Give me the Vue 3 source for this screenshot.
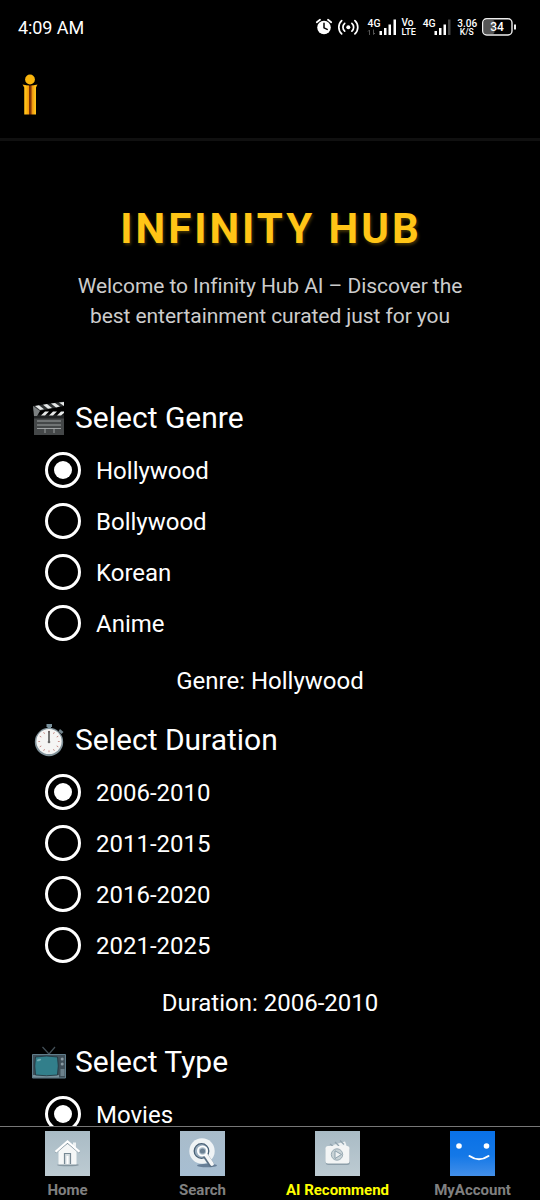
<script setup>
import { reactive } from 'vue'

const sections = reactive([
  { icon: 'clapper', title: 'Select Genre', label: 'Genre', value: 'Hollywood', options: ['Hollywood', 'Bollywood', 'Korean', 'Anime'] },
  { icon: 'watch', title: 'Select Duration', label: 'Duration', value: '2006-2010', options: ['2006-2010', '2011-2015', '2016-2020', '2021-2025'] },
  { icon: 'tv', title: 'Select Type', value: 'Movies', options: ['Movies'] }
])
const ticks = Array.from({ length: 12 }, (_, i) => i * 30)
</script>

<template>
  <div class="screen">
    <div class="status">
      <span class="time">4:09 AM</span>
      <svg class="indicators" width="206" height="30" viewBox="0 0 206 30">
        <g fill="none" stroke="#fff" stroke-linecap="round">
          <circle cx="10" cy="15.5" r="6.8" fill="#fff" stroke="none" />
          <path d="M10 11.3v4.5l3.2 1.6" stroke="#000" stroke-width="1.5" />
          <path d="M2.8 10.2 6 7.8M17.2 10.2 14 7.8" stroke-width="1.8" />
          <circle cx="34.3" cy="15.2" r="2" fill="#fff" stroke="none" />
          <path d="M30.7 11.3a5.2 5.2 0 0 0 0 7.8M37.9 11.3a5.2 5.2 0 0 1 0 7.8M27.7 8.6a9 9 0 0 0 0 13.2M40.9 8.6a9 9 0 0 1 0 13.2" stroke-width="1.7" />
        </g>
        <g fill="#fff" font-weight="500">
          <text x="53.5" y="14.5" font-size="10.5" textLength="13" lengthAdjust="spacingAndGlyphs">4G</text>
          <text x="87.5" y="14.3" font-size="10" textLength="12">Vo</text>
          <text x="87.5" y="23.3" font-size="9.8" textLength="14.5" lengthAdjust="spacingAndGlyphs">LTE</text>
          <text x="108.7" y="14.5" font-size="10.5" textLength="13" lengthAdjust="spacingAndGlyphs">4G</text>
          <text x="143.3" y="14.5" font-size="10.5" textLength="20" lengthAdjust="spacingAndGlyphs">3.06</text>
          <text x="145.8" y="23" font-size="8.8" textLength="14" lengthAdjust="spacingAndGlyphs">K/S</text>
          <path d="M65.5 19h2.5v4h-2.500zM70 16h2.500v7h-2.500zM74.500 12.500h2.500v10.500h-2.500zM79.500 7.500h2.500v15.500h-2.500zM120.500 19h2.500v4h-2.500zM125 16h2.500v7h-2.500zM129.500 12.500h2.500v10.500h-2.500z" />
          <path d="M134 7.500h2.500v15.500h-2.500z" fill="#454545" />
        </g>
        <path d="M55.500 23v-5l-1.500 1.500M59.500 17.500v5l1.500-1.500" fill="none" stroke="#555" />
        <rect x="169.500" y="8" width="11" height="14" rx="2" fill="#555" />
        <rect x="168.700" y="6.700" width="29.300" height="16.300" rx="4" fill="none" stroke="#eee" stroke-width="1.400" />
        <path d="M201 12.500v5" stroke="#eee" stroke-width="2" />
        <text x="183" y="19.200" fill="#fff" font-size="12" font-weight="500" text-anchor="middle">34</text>
      </svg>
    </div>

    <header class="header">
      <svg width="18" height="42" viewBox="0 0 18 42">
        <defs>
          <linearGradient id="gold" x1="0" x2="1">
            <stop offset="0" stop-color="#ee9b08" /><stop offset=".2" stop-color="#ffc21a" />
            <stop offset=".4" stop-color="#f89e08" /><stop offset=".45" stop-color="#7e3005" />
            <stop offset=".57" stop-color="#8b3a08" /><stop offset=".64" stop-color="#ed930c" />
            <stop offset=".85" stop-color="#ffc51d" /><stop offset="1" stop-color="#ed9808" />
          </linearGradient>
        </defs>
        <circle cx="9" cy="5.500" r="4.900" fill="#f9b50d" />
        <path d="M1.500 10.500q7.500 2 15 0l-1.500 3V40.500H3.200V13.500z" fill="url(#gold)" />
      </svg>
    </header>

    <main class="content">
      <h1>INFINITY HUB</h1>
      <p class="intro">Welcome to Infinity Hub AI – Discover the<br>best entertainment curated just for you</p>

      <section v-for="s in sections" :key="s.title">
        <h2>
          <svg v-if="s.icon === 'clapper'" class="emoji" viewBox="0 0 36 36">
            <path d="M3 15h30v20H3z" fill="#444748" />
            <path d="M3 14.500h30v4H3z" fill="#202223" />
            <path d="m2 6 31-4.500v4.500L3 12z" fill="#2f3233" />
            <path d="m4 6 5 4 4-.8-5-4zm8-1.200 5 3.900 4-.8-5-3.800zm8-1.200 5 3.800 4-.8-5-3.600zm8-1.200 5 3.500V2z" fill="#e5e7e7" />
            <path d="m2 6 7 5-3 5H3z" fill="#7c8081" />
            <path d="M14 11.500h4l-4 4h-4zm8 0h4l-4 4h-4zm8 0h3v1.500L30 15.500h-4z" fill="#e8eaea" />
            <path d="M6 21h24M6 25h24M6 28.500h24M14 28.500V33m9-4.500V33" fill="none" stroke="#a7aaab" stroke-width=".9" />
          </svg>
          <svg v-else-if="s.icon === 'watch'" class="emoji" viewBox="0 0 36 36">
            <path d="M15.500 2h5.500v3h-1v3h-3.500V5h-1z" fill="#78909c" />
            <path d="m29 7 3.500 3-2 2-3-2.800z" fill="#71838c" />
            <circle cx="18" cy="20" r="14.200" fill="#82939b" />
            <circle cx="18" cy="19.500" r="12.600" fill="#f5f5f4" />
            <path v-for="t in ticks" :key="t" d="M18 8.800v1.800" :transform="`rotate(${t} 18 19.500)`" stroke="#bd7772" stroke-width=".8" />
            <path d="M18 9v11" stroke="#333" stroke-width="1.300" /><circle cx="18" cy="20" r="1.300" fill="#666" />
          </svg>
          <svg v-else class="emoji" viewBox="0 0 36 36">
            <path d="m11.500 3 6.500 7 6-7" fill="none" stroke="#435058" stroke-width="1.200" />
            <path d="M1.500 10.500h33V34h-33z" fill="#40505a" stroke="#607d8b" />
            <path d="M2 31h26v2.500H2z" fill="#76909b" />
            <path d="M4.500 13q11-2 22 0 1.500 9 0 18-11 1.500-22 0-1.500-9 0-18z" fill="#327f8b" stroke="#203039" stroke-width=".8" />
            <ellipse cx="8" cy="16" rx="2.300" ry="1.100" fill="#72abb2" transform="rotate(-20 8 16)" />
            <circle cx="31.200" cy="15" r="1.500" fill="#899ba3" /><circle cx="31.200" cy="20" r="1.500" fill="#899ba3" />
            <path d="M29.500 25h4v7h-4z" fill="#6b808b" />
          </svg>
          <span>{{ s.title }}</span>
        </h2>
        <div class="options">
          <div v-for="o in s.options" :key="o" class="option" @click="s.value = o">
            <i class="radio" :class="{ on: s.value === o }"></i><span>{{ o }}</span>
          </div>
        </div>
        <p v-if="s.label" class="result">{{ s.label }}: {{ s.value }}</p>
      </section>
    </main>

    <nav class="tabs">
      <div class="tab">
        <svg viewBox="0 0 45 45">
          <defs><linearGradient id="pale" x2="0" y2="1"><stop stop-color="#a9bbc5" /><stop offset="1" stop-color="#bdcbd2" /></linearGradient></defs>
          <path d="M0 0h45v45H0z" fill="url(#pale)" />
          <ellipse cx="23" cy="34" rx="11" ry="1.300" fill="#8596a0" />
          <path d="M13.500 20 22.500 11.500l9 8.500v13.500h-18z" fill="#f5f7f7" />
          <path d="M28 11.500h3V18l-3-3z" fill="#eef2f3" />
          <path d="m10.500 21.500 12-10 12 10" fill="none" stroke="#778b97" stroke-width="2" />
          <path d="m10.500 20.800 12-10.300 12 10.300" fill="none" stroke="#fff" stroke-width="2.200" />
          <path d="M19.500 33V22.500h6V33" fill="#d6dee1" stroke="#778994" stroke-width="1.200" /><path d="M21.500 25h2v8h-2z" fill="#fff" />
        </svg>
        <span>Home</span>
      </div>
      <div class="tab">
        <svg viewBox="0 0 45 45">
          <defs><linearGradient id="blueGrey" x2="0" y2="1"><stop stop-color="#a9bcca" /><stop offset="1" stop-color="#a7bed2" /></linearGradient></defs>
          <path d="M0 0h45v45H0z" fill="url(#blueGrey)" />
          <ellipse cx="27" cy="34.500" rx="10" ry="1.700" fill="#667e97" />
          <circle cx="22" cy="20" r="12.700" fill="#eff3f5" />
          <circle cx="21.500" cy="20" r="7.300" fill="#9baebf" stroke="#496176" stroke-width="1.300" />
          <path d="m25 24 6 9" stroke="#5b7185" stroke-width="5.500" stroke-linecap="round" />
          <path d="m26 24 6 9" stroke="#f4f6f7" stroke-width="3.800" stroke-linecap="round" />
          <circle cx="22.500" cy="20" r="4.600" fill="#b3c3cf" stroke="#fff" stroke-width="1.800" />
          <circle cx="22.500" cy="20" r="2.600" fill="#6c8194" />
        </svg>
        <span>Search</span>
      </div>
      <div class="tab active">
        <svg viewBox="0 0 45 45">
          <path d="M0 0h45v45H0z" fill="url(#pale)" />
          <path d="m13 15.500 17-5 1.500 4V17H13z" fill="#eef2f3" />
          <path d="m15 13 4 3m1-5 4 4m1-5.500 4 4" stroke="#91a3ae" stroke-width="1.300" />
          <rect x="10.800" y="16.500" width="24" height="17.500" rx="2.500" fill="#8c9ea9" />
          <rect x="10.500" y="15" width="24" height="17.500" rx="2.500" fill="#f3f5f5" />
          <circle cx="22" cy="23.500" r="5.700" fill="#c8d2d6" stroke="#9aabb4" />
          <path d="m20 19.800 6.500 3.700-6.500 4z" fill="#eef1f2" stroke="#859aa6" stroke-width=".9" />
        </svg>
        <span>AI Recommend</span>
      </div>
      <div class="tab">
        <svg viewBox="0 0 45 45">
          <defs><linearGradient id="blue" x2="0" y2="1"><stop stop-color="#0971e7" /><stop offset=".55" stop-color="#1478e7" /><stop offset="1" stop-color="#438fe9" /></linearGradient></defs>
          <path d="M0 0h45v45H0z" fill="url(#blue)" />
          <circle cx="9" cy="15" r="2.800" fill="#fff" /><circle cx="36.500" cy="15" r="2.800" fill="#fff" />
          <path d="M19.500 25q9.500 6.500 19 0" fill="none" stroke="#fff" stroke-width="2" stroke-linecap="round" />
        </svg>
        <span>MyAccount</span>
      </div>
    </nav>
  </div>
</template>

<style>
body { background: #000; }
</style>

<style scoped>
.screen { height: 1200px; width: 540px; display: flex; flex-direction: column; overflow: hidden; background: #000; color: #fff; font-family: Roboto, sans-serif; }
.status { height: 56px; flex: none; box-sizing: border-box; padding: 12px 20px 0 18px; display: flex; justify-content: space-between; }
.time { font-size: 18px; line-height: 32px; letter-spacing: -.08px; }
.header { height: 85px; flex: none; box-sizing: border-box; padding: 18px 21px 0; border-bottom: 3px solid #101010; }
.header svg { display: block; }
.content { flex: 1; min-height: 0; overflow: hidden; }
h1 { margin: 63px 0 0; padding-left: 2px; font-size: 42px; line-height: 50px; font-weight: 700; letter-spacing: 3px; text-align: center; color: #ffc516; text-shadow: 1.500px 1.500px 3px #ffc51640; }
.intro { margin: 17px 0 66px; font-size: 21px; line-height: 30px; letter-spacing: -.07px; text-align: center; color: #ccc; }
section { height: 322px; }
h2 { margin: 0; height: 42px; padding-left: 31px; display: flex; align-items: center; gap: 8px; font-size: 30px; line-height: 42px; font-weight: 400; }
.emoji { width: 36px; height: 36px; }
.options { padding: 5px 0 0 45px; }
.option { height: 51px; display: flex; align-items: center; gap: 15px; font-size: 24px; }
.option span { position: relative; top: 1px; }
.radio { box-sizing: border-box; width: 36px; height: 36px; border: 3px solid #fff; border-radius: 50%; display: grid; place-items: center; }
.radio.on::after { content: ""; width: 18px; height: 18px; border-radius: 50%; background: #fff; }
.result { margin: 15px 0 0; font-size: 24px; line-height: 36px; text-align: center; }
.tabs { height: 74px; flex: none; box-sizing: border-box; border-top: 1px solid #777; display: grid; grid-template-columns: repeat(4, 1fr); }
.tab { display: flex; flex-direction: column; align-items: center; padding-top: 4px; color: #808080; font-size: 15px; font-weight: 700; line-height: 18px; white-space: nowrap; }
.tab svg { width: 45px; height: 45px; flex: none; margin-bottom: 5px; }
.active { color: #ff0; }
</style>
